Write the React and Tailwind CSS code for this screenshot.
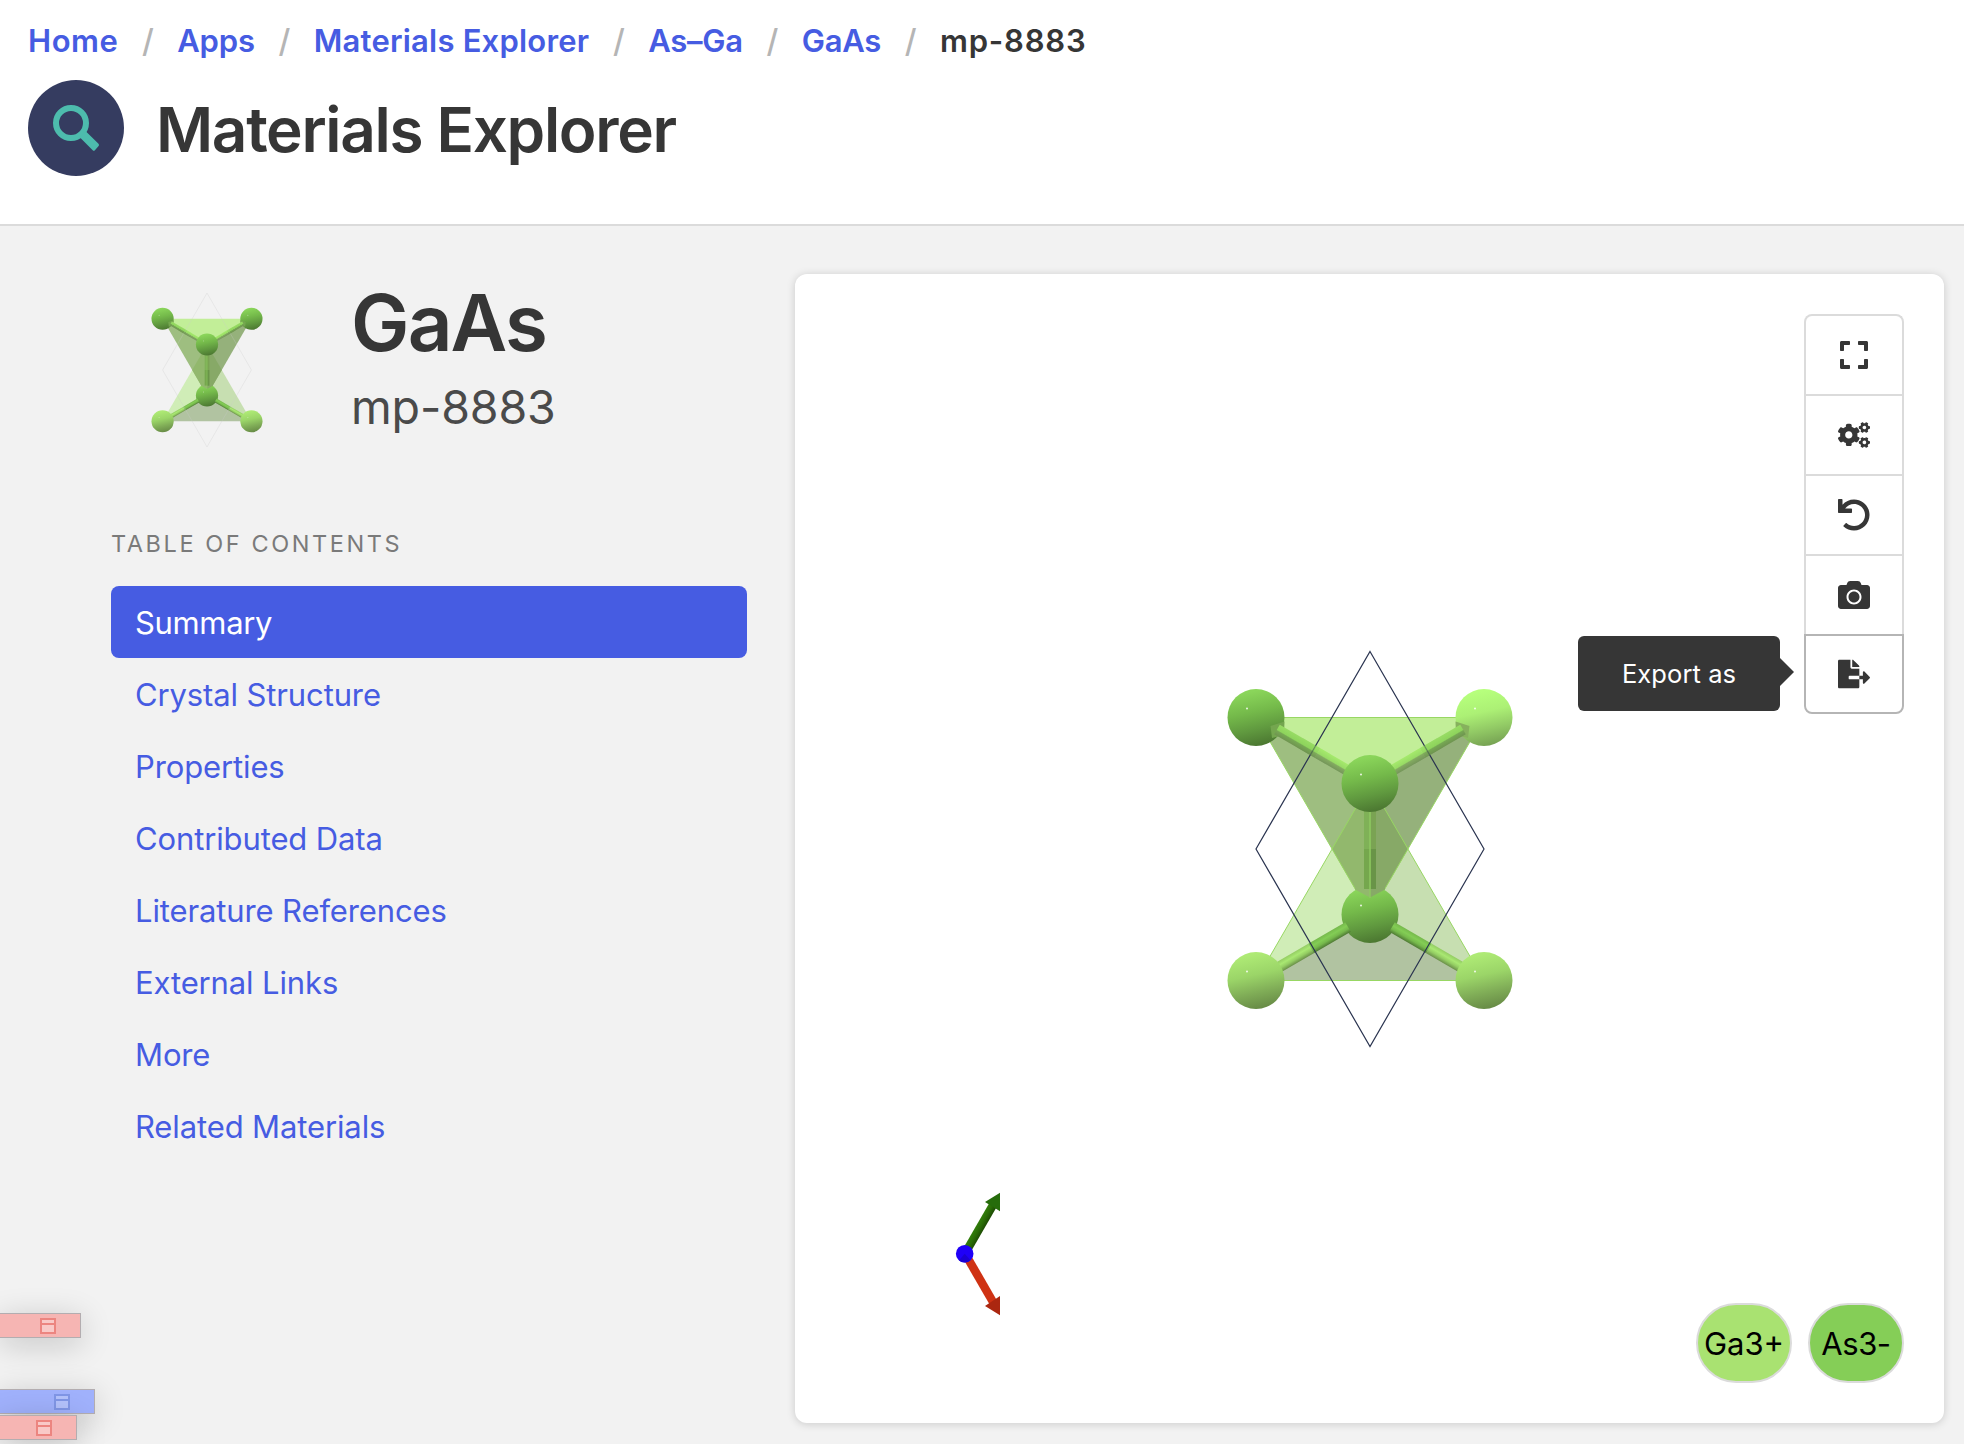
import React from 'react';
import { FaExpand, FaCogs, FaUndo, FaCamera, FaFileExport } from 'react-icons/fa';

const crumbs = [
  { label: 'Home', cls: 'tracking-[0.017em]' },
  { label: 'Apps', cls: 'tracking-[-0.005em]' },
  { label: 'Materials Explorer', cls: 'tracking-[0.0066em]' },
  { label: 'As–Ga', cls: 'tracking-[-0.008em]' },
  { label: 'GaAs', cls: 'tracking-[-0.008em]' },
];

const contents = [
  'Summary',
  'Crystal Structure',
  'Properties',
  'Contributed Data',
  'Literature References',
  'External Links',
  'More',
  'Related Materials',
];

const tools = [FaExpand, FaCogs, FaUndo, FaCamera, FaFileExport];

function Breadcrumb() {
  return (
    <nav className="flex h-12 items-center gap-[23.6px] text-[31px] font-semibold text-[#465ce2]">
      {crumbs.map((c) => (
        <React.Fragment key={c.label}>
          <a className={c.cls}>{c.label}</a>
          <span className="w-[11.7px] text-center text-[32px] font-medium text-[#b5b5b5]">/</span>
        </React.Fragment>
      ))}
      <span className="tracking-[0.026em] text-[#363636]">mp-8883</span>
    </nav>
  );
}

function SearchBadge() {
  return (
    <svg className="size-24 shrink-0" viewBox="0 0 96 96">
      <circle cx="48" cy="48" r="48" fill="#353c60" />
      <circle cx="43" cy="43" r="15" fill="none" stroke="#4dbcad" strokeWidth="6" />
      <path d="M52 57.5 L58 51.5 L70.5 63.8 Q71.6 65 70.6 66.1 L66.9 70.2 Q65.8 71.2 64.7 70.2 Z" fill="#4dbcad" />
    </svg>
  );
}

// Cylinder between two points, each half in its own colour.
function Bond({ x1, y1, x2, y2, from, to, id }) {
  const len = Math.hypot(x2 - x1, y2 - y1);
  const ang = (Math.atan2(y2 - y1, x2 - x1) * 180) / Math.PI;
  return (
    <g transform={`translate(${x1} ${y1}) rotate(${ang})`}>
      <rect x="0" y="-5.5" width={len / 2} height="11" fill={`url(#${id}-${from})`} />
      <rect x={len / 2} y="-5.5" width={len / 2} height="11" fill={`url(#${id}-${to})`} />
    </g>
  );
}

function Atom({ x, y, kind, id }) {
  return (
    <g>
      <circle cx={x} cy={y} r="28.5" fill={`url(#${id}-atom-${kind})`} />
      <circle cx={x - 9} cy={y - 9} r="1" fill="#ffffff" opacity="0.85" />
    </g>
  );
}

function CylinderGradient({ id, light, mid, dark }) {
  return (
    <linearGradient id={id} x1="0" y1="0" x2="0" y2="1">
      <stop offset="0" stopColor={mid} />
      <stop offset="0.35" stopColor={light} />
      <stop offset="0.65" stopColor={mid} />
      <stop offset="1" stopColor={dark} />
    </linearGradient>
  );
}

function SphereGradient({ id, a, b, c, d }) {
  return (
    <linearGradient id={id} x1="0.4" y1="0" x2="0.62" y2="1">
      <stop offset="0.05" stopColor={a} />
      <stop offset="0.4" stopColor={b} />
      <stop offset="0.7" stopColor={c} />
      <stop offset="1" stopColor={d} />
    </linearGradient>
  );
}

function Crystal({ id, cell, cellOpacity = 1, bright, edges }) {
  const edge = edges ? '#98d763' : 'none';
  return (
    <g>
      <defs>
        <SphereGradient id={`${id}-atom-as`} a="#8ad55a" b="#74b94a" c="#60993f" d="#4a7530" />
        <SphereGradient id={`${id}-atom-ga`} a="#aeea75" b="#9bd568" c="#80ad57" d="#668945" />
        <SphereGradient id={`${id}-atom-hi`} a="#b6ff7c" b="#acf075" c="#92ca65" d="#75a052" />
        <CylinderGradient id={`${id}-as`} light="#83cd55" mid="#76b94c" dark="#4f7a34" />
        <CylinderGradient id={`${id}-ga`} light="#a9e872" mid="#94cd63" dark="#6a8f49" />
        <linearGradient id={`${id}-upas`} x1="0" y1="0" x2="0" y2="1">
          <stop offset="0" stopColor="#98dc64" />
          <stop offset="0.5" stopColor="#8ed45c" />
          <stop offset="0.6" stopColor="#76a853" />
          <stop offset="1" stopColor="#6f9450" />
        </linearGradient>
        <linearGradient id={`${id}-upga`} x1="0" y1="0" x2="0" y2="1">
          <stop offset="0" stopColor="#a5ea6c" />
          <stop offset="0.5" stopColor="#98db65" />
          <stop offset="0.6" stopColor="#83ab60" />
          <stop offset="1" stopColor="#75965a" />
        </linearGradient>
      </defs>

      {/* lower tetrahedron */}
      <polygon points="0,-65.5 -114,131.5 0,65.5" fill="#d0edb7" />
      <polygon points="0,-65.5 114,131.5 0,65.5" fill="#c7dfb1" />
      <polygon points="-114,131.5 114,131.5 0,65.5" fill="#b1c3a1" />
      <polygon points="0,-65.5 114,131.5 -114,131.5" fill="none" stroke={edge} strokeWidth="1" />

      {/* upper tetrahedron */}
      <polygon points="-114,-131.5 114,-131.5 0,-65.5" fill="#c2ee98" />
      <polygon points="-114,-131.5 0,-65.5 0,65.5" fill="#9ebe80" />
      <polygon points="114,-131.5 0,-65.5 0,65.5" fill="#95b17b" />
      <polygon points="0,-65.5 -38,0 0,65.5" fill="#92b86d" />
      <polygon points="0,-65.5 38,0 0,65.5" fill="#87a967" />
      <path d="M-114,-131.5 H114 L0,65.5 Z M-38,0 L0,-65.5 L38,0" fill="none" stroke={edge} strokeWidth="1" />

      <Atom id={id} x={-114} y={-131.5} kind="as" />
      <Atom id={id} x={114} y={-131.5} kind={bright ? 'hi' : 'as'} />
      <Atom id={id} x={0} y={65.5} kind="as" />

      {/* bond along the axis, seen through the faces */}
      <polygon points="-15,40.5 0,48.5 0,30 -15,30" fill="#92b86d" />
      <polygon points="15,40.5 0,48.5 0,30 15,30" fill="#87a967" />
      <rect x="-6" y="-45" width="12" height="45" fill="#7fb157" />
      <rect x="1" y="-45" width="5" height="45" fill="#7aa353" />
      <rect x="-6" y="0" width="12" height="40" fill="#75a74d" />
      <rect x="1" y="0" width="5" height="40" fill="#699448" />
      <path d="M0,-40 V49" stroke="#8fc961" strokeWidth="1.4" />

      {/* face corners that cut into the upper atoms */}
      <polygon points="-99.5,-123 -85.5,-127.5 -86,-114 -98,-111" fill="#74a64f" />
      <polygon points="99.5,-123 85.5,-127.5 86,-114 98,-111" fill={bright ? '#86b15d' : '#74a64f'} />
      <Bond id={id} x1={-93} y1={-119.5} x2={-12} y2={-72.5} from="upas" to="upga" />
      <g transform="scale(-1 1)">
        <Bond id={id} x1={-93} y1={-119.5} x2={-12} y2={-72.5} from="upas" to="upga" />
      </g>

      <Bond id={id} x1={-96} y1={121} x2={-22} y2={78} from="ga" to="as" />
      <Bond id={id} x1={22} y1={78} x2={96} y2={121} from="as" to="ga" />

      <Atom id={id} x={-114} y={131.5} kind="ga" />
      <Atom id={id} x={114} y={131.5} kind="ga" />

      <polygon points="0,-197.5 114,0 0,197.5 -114,0" fill="none" stroke={cell} strokeWidth="1.2" opacity={cellOpacity} />
      <g opacity="0.55">
        <Bond id={id} x1={-70} y1={-106.2} x2={-42} y2={-89.9} from="upas" to="upga" />
        <g transform="scale(-1 1)">
          <Bond id={id} x1={-70} y1={-106.2} x2={-42} y2={-89.9} from="upas" to="upga" />
        </g>
      </g>
      <Atom id={id} x={0} y={-65.5} kind="as" />
    </g>
  );
}

function Axes() {
  return (
    <g>
      <defs>
        <linearGradient id="axis-green" gradientUnits="userSpaceOnUse" x1="180" y1="953" x2="188" y2="957.5">
          <stop offset="0" stopColor="#32800a" />
          <stop offset="0.5" stopColor="#2a6c07" />
          <stop offset="1" stopColor="#1c4a03" />
        </linearGradient>
        <clipPath id="axis-clip">
          <rect x="140" y="880" width="65" height="200" />
        </clipPath>
      </defs>
      <g clipPath="url(#axis-clip)">
        <path d="M170,979.5 L198,931" stroke="url(#axis-green)" strokeWidth="8.5" fill="none" />
        <polygon points="190,928 208,917 208,939" fill="#266c0b" />
        <path d="M170,979.5 L198,1028" stroke="#cf3213" strokeWidth="8.5" fill="none" />
        <polygon points="190,1032 208,1020 208,1043" fill="#ab2710" />
      </g>
      <circle cx="169.7" cy="979.7" r="8.8" fill="#1f00f7" />
      <path d="M169.7,979.7 L164,986.4 A8.8 8.8 0 0 0 175.5,986.3 Z" fill="#1b00d2" />
    </g>
  );
}

function Tooltip() {
  return (
    <div className="absolute right-[122px] top-0 flex h-[75px] w-[202px] items-center justify-center rounded-md bg-[#363636] pt-0.5 text-[25.5px] text-white">
      <span className="whitespace-nowrap tracking-[0.0035em]">Export as</span>
      <span className="absolute left-full top-[22px] size-0 border-y-[14px] border-l-[14px] border-y-transparent border-l-[#363636]" />
    </div>
  );
}

function Toolbar() {
  return (
    <div className="flex w-[100px] flex-col">
      {tools.map((Icon, i) => {
        const last = i === tools.length - 1;
        return (
          <div
            key={i}
            className={
              'relative flex h-20 items-center justify-center text-[32px] text-[#363636] ' +
              (last
                ? 'rounded-b-lg border-2 border-[#b5b5b5]'
                : 'border-x-2 border-t-2 border-[#dbdbdb] ' + (i === 0 ? 'rounded-t-lg' : ''))
            }
          >
            <Icon />
            {last && <Tooltip />}
          </div>
        );
      })}
    </div>
  );
}

function Viewer() {
  return (
    <section className="relative flex size-[1149px] flex-col items-end justify-between rounded-xl bg-white px-10 pt-10 pb-10 shadow-[0_1px_8px_rgba(10,10,10,0.17)]">
      <svg className="absolute inset-0 size-full" viewBox="0 0 1149 1149">
        <g transform="translate(575 575)">
          <Crystal id="main" cell="#2a3450" bright edges />
        </g>
        <Axes />
      </svg>
      <Toolbar />
      <div className="relative flex gap-4 text-[31px] text-black">
        <span className="flex h-20 w-24 items-center justify-center rounded-[40px] border-2 border-[#dbdbdb] bg-[#a9e271] pt-0.5">Ga3+</span>
        <span className="flex h-20 w-24 items-center justify-center rounded-[40px] border-2 border-[#dbdbdb] bg-[#85ce57] pt-0.5 tracking-[-0.015em]">As3-</span>
      </div>
    </section>
  );
}

function Sidebar() {
  return (
    <aside className="w-[636px] shrink-0">
      <div className="flex h-[300px]">
        <svg className="ml-[36px] mt-[54px] h-[180px] w-[120px] shrink-0" viewBox="-154 -231 308 462">
          <Crystal id="thumb" cell="#c8c8c8" cellOpacity={0.6} />
        </svg>
        <div className="ml-[84px] mt-[52px]">
          <h2 className="h-[90px] text-[78px]/[90px] font-semibold tracking-[-0.023em] text-[#363636]">GaAs</h2>
          <p className="mt-2.5 h-[58px] text-[46.5px]/[58px] tracking-[-0.003em] text-[#4a4a4a]">mp-8883</p>
        </div>
      </div>
      <h3 className="h-9 text-[23.5px]/[36px] tracking-[0.11em] text-[#7a7a7a]">TABLE OF CONTENTS</h3>
      <ul className="mt-6">
        {contents.map((item, i) => (
          <li
            key={item}
            className={
              'flex h-[72px] items-center px-6 pt-0.5 text-[31px] ' +
              (i === 0 ? 'rounded-lg bg-[#465ce2] tracking-[-0.011em] text-white' : 'tracking-[-0.004em] text-[#465ce2]')
            }
          >
            {item}
          </li>
        ))}
      </ul>
    </aside>
  );
}

function DebugTag({ className, box, icon, fill }) {
  return (
    <div className={'absolute left-0 flex h-[25px] items-center justify-end border border-l-0 border-[#b3adb0] shadow-[0_6px_32px_rgba(0,0,0,0.2)] ' + box + ' ' + className}>
      <span className={'flex size-4 flex-col border-2 ' + icon}>
        <span className={'h-[3px] ' + fill} />
        <span className="h-0.5" />
        <span className={'flex-1 ' + fill} />
      </span>
    </div>
  );
}

export default function App() {
  return (
    <div className="relative h-[1444px] w-[1964px] overflow-hidden bg-[#f2f2f2] font-['Inter',sans-serif]">
      <header className="h-[226px] border-b-2 border-[#dbdbdb] bg-white pl-[28px] pt-[17px]">
        <Breadcrumb />
        <div className="mt-[15px] flex items-center gap-8">
          <SearchBadge />
          <h1 className="pt-[3px] text-[62px]/[80px] font-semibold tracking-[-0.0214em] text-[#363636]">Materials Explorer</h1>
        </div>
      </header>
      <main className="flex gap-12 pl-[111px]">
        <Sidebar />
        <div className="pt-12">
          <Viewer />
        </div>
      </main>
      <DebugTag className="top-[1313px] w-[81px] pr-6" box="bg-[#f6b5b3]" icon="border-[#ec8580] bg-[#ec8580]" fill="bg-[#f9c9c7]" />
      <DebugTag className="top-[1389px] w-[95px] pr-6" box="bg-[#a0b1fc]" icon="border-[#8096e6] bg-[#8096e6]" fill="bg-[#b4c2fb]" />
      <DebugTag className="top-[1415px] w-[77px] pr-6" box="bg-[#f6b5b3]" icon="border-[#ec8580] bg-[#ec8580]" fill="bg-[#f9c9c7]" />
    </div>
  );
}
